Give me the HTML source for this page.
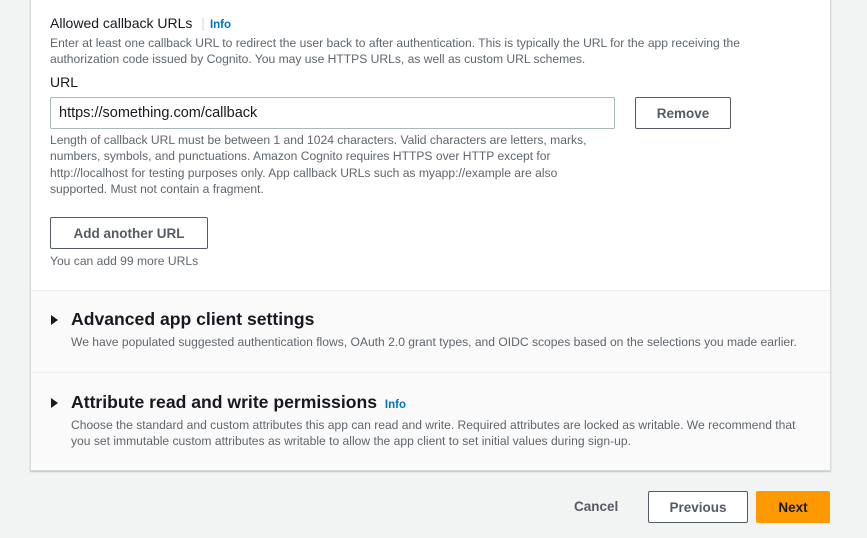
<!DOCTYPE html>
<html><head><style>
*{margin:0;padding:0;box-sizing:border-box}
body{width:867px;height:538px;background:#f2f3f3;font-family:"Liberation Sans",sans-serif;position:relative;overflow:hidden;color:#16191f}
.card{position:absolute;left:30px;top:-2px;width:801px;height:473px;background:#fff;border:1px solid #d5dbdb;border-top:none;box-shadow:0 1px 1px rgba(0,0,0,.2)}
.a{position:absolute;white-space:nowrap}
.s{font-size:12.1px;color:#5f666d}
.info{color:#0073bb;font-weight:bold;font-size:11.5px}
.btn{position:absolute;border:1px solid #545b64;border-radius:2px;background:#fff;font-weight:bold;font-size:13.5px;color:#545b64;display:flex;align-items:center;justify-content:center}
.sec{position:absolute;left:31px;width:799px;background:#fafafa;border-top:1px solid #eaeded}
.h{font-size:17.6px;font-weight:bold;color:#16191f}
.tri{position:absolute;width:0;height:0;border-left:7px solid #16191f;border-top:5px solid transparent;border-bottom:5px solid transparent}
</style></head><body>
<div class="card"></div>
<div class="a" style="left:50px;top:15px;font-size:14px;color:#16191f">Allowed callback URLs <span style="color:#d5dbdb;margin:0 5px">|</span><span class="info">Info</span></div>
<div class="a s" style="left:50px;top:35px;line-height:16px">Enter at least one callback URL to redirect the user back to after authentication. This is typically the URL for the app receiving the<br>authorization code issued by Cognito. You may use HTTPS URLs, as well as custom URL schemes.</div>
<div class="a" style="left:50px;top:74px;font-size:14px">URL</div>
<div class="a" style="left:50px;top:97px;width:565px;height:32px;border:1px solid #aab7b8;border-radius:2px;font-size:14.5px;padding:7px 8px">https://something.com/callback</div>
<div class="btn" style="left:635px;top:97px;width:96px;height:32px">Remove</div>
<div class="a s" style="left:50px;top:132px;line-height:16.3px">Length of callback URL must be between 1 and 1024 characters. Valid characters are letters, marks,<br>numbers, symbols, and punctuations. Amazon Cognito requires HTTPS over HTTP except for<br>http://localhost for testing purposes only. App callback URLs such as myapp://example are also<br>supported. Must not contain a fragment.</div>
<div class="btn" style="left:50px;top:217px;width:158px;height:32px">Add another URL</div>
<div class="a s" style="left:50px;top:254px">You can add 99 more URLs</div>
<div class="sec" style="top:290px;height:82px"></div>
<div class="tri" style="left:51px;top:315px"></div>
<div class="a h" style="left:71px;top:309px">Advanced app client settings</div>
<div class="a s" style="left:71px;top:335px">We have populated suggested authentication flows, OAuth 2.0 grant types, and OIDC scopes based on the selections you made earlier.</div>
<div class="sec" style="top:372px;height:98px"></div>
<div class="tri" style="left:51px;top:398px"></div>
<div class="a h" style="left:71px;top:392px">Attribute read and write permissions <span class="info" style="margin-left:3px">Info</span></div>
<div class="a s" style="left:71px;top:417px;line-height:16px">Choose the standard and custom attributes this app can read and write. Required attributes are locked as writable. We recommend that<br>you set immutable custom attributes as writable to allow the app client to set initial values during sign-up.</div>
<div class="a" style="left:574px;top:499px;font-size:13.5px;font-weight:bold;color:#545b64">Cancel</div>
<div class="btn" style="left:648px;top:491px;width:100px;height:32px">Previous</div>
<div class="btn" style="left:756px;top:491px;width:74px;height:32px;background:#ff9900;border-color:#ff9900;color:#16191f">Next</div>
</body></html>
